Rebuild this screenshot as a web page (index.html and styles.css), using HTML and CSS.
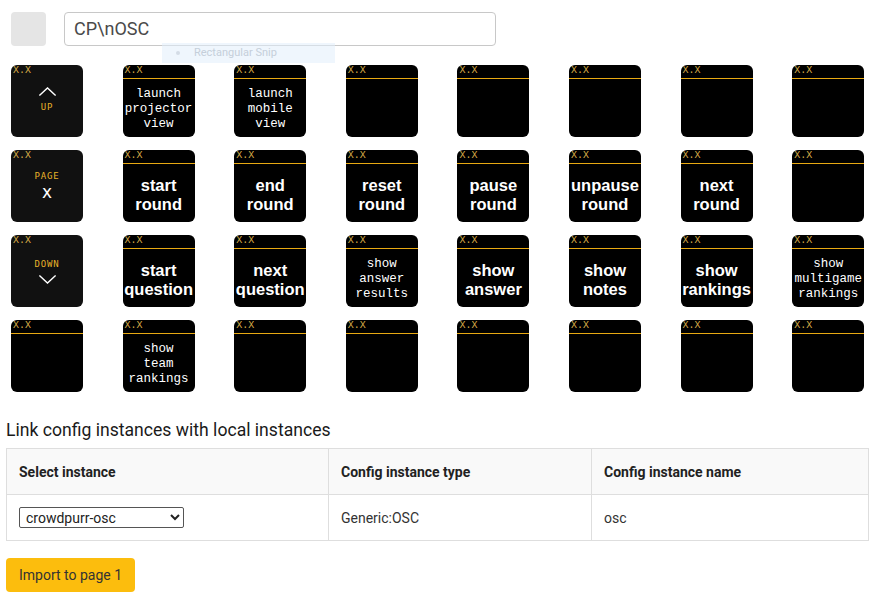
FILE: index.html
```html
<!DOCTYPE html>
<html>
<head>
<meta charset="utf-8">
<link rel="stylesheet" href="styles.css">
</head>
<body>
<div class="page">
  <div class="top">
    <div class="swatch"></div>
    <div class="name-input">CP\nOSC</div>
    <div class="snip"><span class="snip-dot"></span>Rectangular Snip</div>
  </div>

  <div class="grid">
    <div class="btn nav"><span class="cap">X.X</span><div class="nav-body nav-up"><svg class="chev" viewBox="0 0 20 10" width="19" height="9"><path d="M1 9.5 L10 1 L19 9.5" fill="none" stroke="#fff" stroke-width="1.5"/></svg><span class="nav-label">UP</span></div></div>
    <div class="btn"><span class="cap">X.X</span><div class="body small">launch<br>projector<br>view</div></div>
    <div class="btn"><span class="cap">X.X</span><div class="body small">launch<br>mobile<br>view</div></div>
    <div class="btn"><span class="cap">X.X</span><div class="body"></div></div>
    <div class="btn"><span class="cap">X.X</span><div class="body"></div></div>
    <div class="btn"><span class="cap">X.X</span><div class="body"></div></div>
    <div class="btn"><span class="cap">X.X</span><div class="body"></div></div>
    <div class="btn"><span class="cap">X.X</span><div class="body"></div></div>

    <div class="btn nav"><span class="cap">X.X</span><div class="nav-body nav-page"><span class="nav-label">PAGE</span><span class="nav-x">x</span></div></div>
    <div class="btn"><span class="cap">X.X</span><div class="body big">start<br>round</div></div>
    <div class="btn"><span class="cap">X.X</span><div class="body big">end<br>round</div></div>
    <div class="btn"><span class="cap">X.X</span><div class="body big">reset<br>round</div></div>
    <div class="btn"><span class="cap">X.X</span><div class="body big">pause<br>round</div></div>
    <div class="btn"><span class="cap">X.X</span><div class="body big">unpause<br>round</div></div>
    <div class="btn"><span class="cap">X.X</span><div class="body big">next<br>round</div></div>
    <div class="btn"><span class="cap">X.X</span><div class="body"></div></div>

    <div class="btn nav"><span class="cap">X.X</span><div class="nav-body nav-down"><span class="nav-label">DOWN</span><svg class="chev" viewBox="0 0 20 10" width="19" height="9"><path d="M1 0.5 L10 9 L19 0.5" fill="none" stroke="#fff" stroke-width="1.5"/></svg></div></div>
    <div class="btn"><span class="cap">X.X</span><div class="body big">start<br>question</div></div>
    <div class="btn"><span class="cap">X.X</span><div class="body big">next<br>question</div></div>
    <div class="btn"><span class="cap">X.X</span><div class="body small">show<br>answer<br>results</div></div>
    <div class="btn"><span class="cap">X.X</span><div class="body big">show<br>answer</div></div>
    <div class="btn"><span class="cap">X.X</span><div class="body big">show<br>notes</div></div>
    <div class="btn"><span class="cap">X.X</span><div class="body big">show<br>rankings</div></div>
    <div class="btn"><span class="cap">X.X</span><div class="body small">show<br>multigame<br>rankings</div></div>

    <div class="btn"><span class="cap">X.X</span><div class="body"></div></div>
    <div class="btn"><span class="cap">X.X</span><div class="body small">show<br>team<br>rankings</div></div>
    <div class="btn"><span class="cap">X.X</span><div class="body"></div></div>
    <div class="btn"><span class="cap">X.X</span><div class="body"></div></div>
    <div class="btn"><span class="cap">X.X</span><div class="body"></div></div>
    <div class="btn"><span class="cap">X.X</span><div class="body"></div></div>
    <div class="btn"><span class="cap">X.X</span><div class="body"></div></div>
    <div class="btn"><span class="cap">X.X</span><div class="body"></div></div>
  </div>

  <h2 class="title">Link config instances with local instances</h2>
  <table class="tbl">
    <thead>
      <tr><th class="c1">Select instance</th><th class="c2">Config instance type</th><th class="c3">Config instance name</th></tr>
    </thead>
    <tbody>
      <tr>
        <td><select class="sel"><option>crowdpurr-osc</option></select></td>
        <td>Generic:OSC</td>
        <td>osc</td>
      </tr>
    </tbody>
  </table>
  <button class="import">Import to page 1</button>
</div>
</body>
</html>
```

FILE: styles.css
```css
* { box-sizing: border-box; }
html, body { margin: 0; padding: 0; background: #fff; }
body { font-family: Roboto, "Liberation Sans", sans-serif; color: #222; }

.page { padding: 12px 11px 0 6px; }

.top {
  position: relative;
  display: flex;
  align-items: center;
  gap: 18px;
  padding-left: 5px;
  height: 34px;
}
.swatch {
  width: 35px;
  height: 34px;
  background: #e5e5e5;
  border-radius: 4px;
}
.name-input {
  width: 432px;
  height: 34px;
  border: 1px solid #c8c8c8;
  border-radius: 4px;
  padding: 0 9px;
  font-size: 18px;
  line-height: 32px;
  color: #4a4a4a;
  background: #fff;
}
.snip {
  position: absolute;
  left: 156px;
  top: 31px;
  width: 173px;
  height: 20px;
  background: rgba(225, 238, 252, 0.55);
  color: #c5cfda;
  font-size: 11px;
  line-height: 20px;
  padding-left: 32px;
  z-index: 2;
}
.snip-dot {
  position: absolute;
  left: 14px;
  top: 8px;
  width: 4px;
  height: 4px;
  border-radius: 50%;
  background: #d4dce6;
}

.grid {
  display: grid;
  grid-template-columns: repeat(8, 72px);
  column-gap: 39.6px;
  row-gap: 13px;
  margin-top: 19px;
  padding-left: 5px;
}
.btn {
  position: relative;
  width: 72px;
  height: 72px;
  background: #000;
  border-radius: 6px;
  overflow: hidden;
  display: flex;
  flex-direction: column;
}
.cap {
  display: block;
  height: 14px;
  border-bottom: 1px solid #e8a912;
  color: #d9ad48;
  font-family: "Liberation Mono", monospace;
  font-size: 10px;
  line-height: 12px;
  padding-left: 2px;
}
.body {
  flex: 1;
  display: flex;
  align-items: center;
  justify-content: center;
  text-align: center;
  color: #fff;
  white-space: nowrap;
}
.small {
  font-family: "Liberation Mono", monospace;
  font-size: 12.5px;
  line-height: 15px;
  padding-top: 3px;
}
.big {
  font-family: "Liberation Sans", Arial, sans-serif;
  font-weight: bold;
  font-size: 16.5px;
  line-height: 19px;
  padding-top: 3px;
}

.nav { background: #111; }
.nav .cap { border-bottom-color: transparent; }
.nav-body {
  display: flex;
  flex-direction: column;
  align-items: center;
}
.nav-up { padding-top: 8px; gap: 7px; }
.nav-page { padding-top: 8px; gap: 5px; }
.nav-down { padding-top: 11px; gap: 6px; }
.nav-label {
  color: #e8b32a;
  font-family: "DejaVu Sans Mono", monospace;
  font-size: 9px;
  line-height: 9px;
  letter-spacing: 0.8px;
}
.nav-x {
  color: #fff;
  font-family: "DejaVu Sans", sans-serif;
  font-size: 17px;
  line-height: 12px;
}
.chev { display: block; }

.title {
  margin: 27px 0 0 0;
  font-size: 17.6px;
  font-weight: 400;
  line-height: 22px;
  color: #1a1a1a;
}
.tbl {
  margin-top: 7px;
  width: 863px;
  border-collapse: collapse;
  font-size: 14px;
}
.tbl th, .tbl td {
  border: 1px solid #dedede;
  text-align: left;
  padding: 0 12px;
}
.tbl th {
  height: 46px;
  background: #f9f9f9;
  font-weight: 700;
  color: #222;
}
.tbl td {
  height: 46px;
  color: #333;
  font-size: 14px;
}
.c1 { width: 322px; }
.c2 { width: 263px; }
.sel {
  width: 165px;
  height: 21px;
  font-family: Roboto, "Liberation Sans", sans-serif;
  font-size: 14px;
  color: #222;
  border: 1px solid #555;
  border-radius: 2px;
  background: #fff;
  padding: 0 2px;
}
.import {
  margin-top: 17px;
  height: 34px;
  padding: 0 13px;
  background: #fcbd0d;
  border: none;
  border-radius: 4px;
  font-family: Roboto, "Liberation Sans", sans-serif;
  font-size: 14px;
  color: #333;
}
```
